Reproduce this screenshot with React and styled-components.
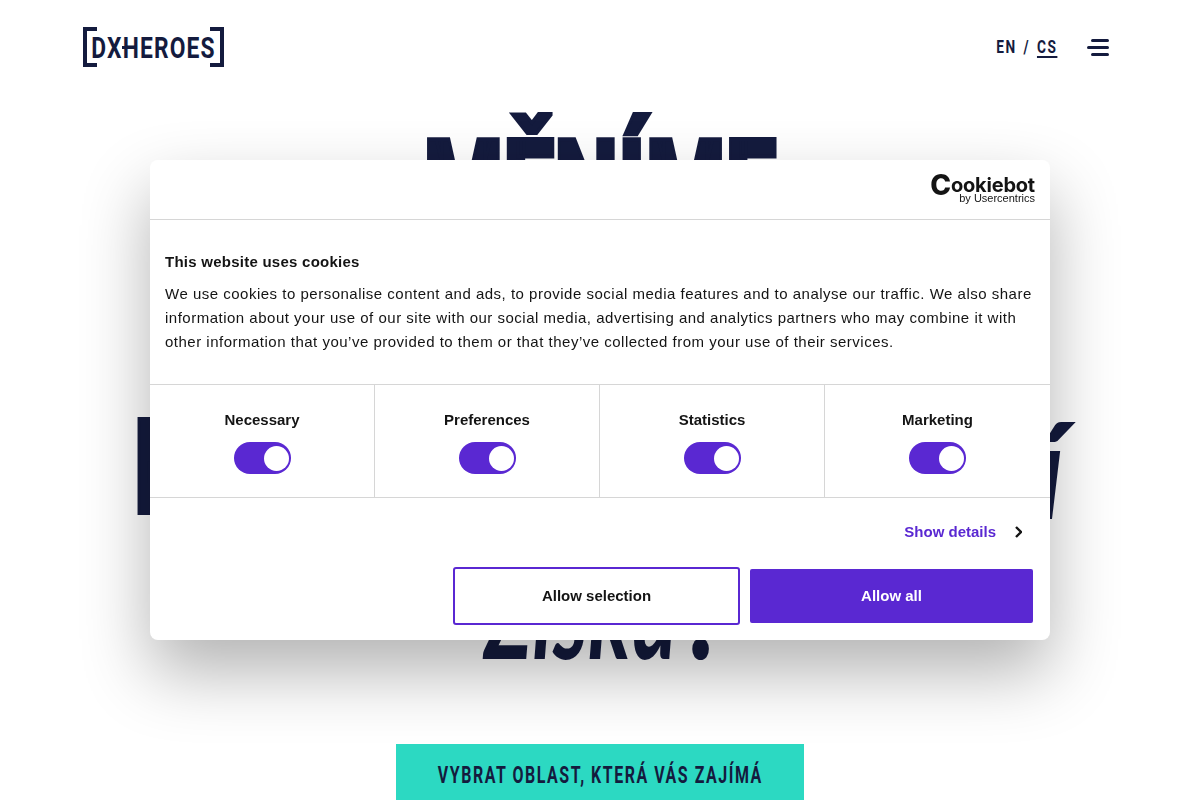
import React from 'react'
import styled, { createGlobalStyle } from 'styled-components'

const GlobalStyle = createGlobalStyle`
    html, body {
        margin: 0;
        height: 800px;
        overflow: hidden;
        background: #fff;
    }
`

const navy = '#141b3e'
const purple = '#5a28d2'
const condensed = 'Roboto, "Liberation Sans", sans-serif'

const Page = styled.div`
    color: ${navy};
    height: 800px;
    overflow: hidden;
`

const Header = styled.header`
    display: flex;
    align-items: center;
    justify-content: space-between;
    height: 40px;
    padding: 27px 91px 0 83px;
`

const Logo = styled.div`
    display: flex;
    align-items: center;
    justify-content: space-between;
    position: relative;
    width: 141px;
    height: 40px;
`

const Bracket = styled.span`
    display: block;
    box-sizing: border-box;
    width: 14px;
    height: 40px;
    border: solid ${navy};
    border-width: ${p => (p.$right ? '4px 4px 4px 0' : '4px 0 4px 4px')};
`

const LogoText = styled.span`
    display: flex;
    justify-content: center;
    width: 123px;
    margin: 0 -5px;
    font-family: ${condensed};
    font-weight: 700;
    font-size: 30px;
    letter-spacing: 1.5px;
    white-space: nowrap;
    transform: scaleX(.76);
`

/* the plus joining X and H in the wordmark */
const LogoCross = styled.span`
    position: absolute;
    left: 39px;
    top: 19px;
    width: 8px;
    height: 3px;
    background: ${navy};
`

const HeaderRight = styled.div`
    display: flex;
    align-items: center;
    gap: 30px;
`

const Lang = styled.div`
    display: flex;
    gap: 9px;
    margin-top: -2px;
    font-family: ${condensed};
    font-weight: 700;
    font-size: 18px;
    letter-spacing: 2px;
    transform: scaleX(.76);
    transform-origin: right;
`

const LangLink = styled.a`
    text-decoration: ${p => (p.$active ? 'underline' : 'none')};
    text-decoration-thickness: 2px;
    text-underline-offset: 3px;
`

const Burger = styled.button`
    display: flex;
    flex-direction: column;
    align-items: flex-end;
    gap: 4px;
    padding: 0;
    border: 0;
    background: none;
`

const BurgerLine = styled.span`
    display: block;
    height: 3px;
    border-radius: 2px;
    width: ${p => (p.$long ? 22 : 18)}px;
    background: ${navy};
`

const Hero = styled.h1`
    margin: 0;
    padding-top: 51px;
    font-weight: 400;
    font-size: 131px;
    line-height: 140px;
`

const HeroLine = styled.div`
    display: flex;
    justify-content: center;
    height: 140px;
    white-space: nowrap;
`

const SplitLine = styled(HeroLine)`
    justify-content: space-between;
    width: 931px;
    margin-left: 134px;
`

const FinalLine = styled(HeroLine)`
    align-items: baseline;
    padding-right: 42px;
`

const Heavy = styled.span`
    display: inline-block;
    font-family: Roboto, "Liberation Sans", sans-serif;
    font-weight: 900;
    -webkit-text-stroke: 4px ${navy};
    transform: scaleX(.695);
    transform-origin: ${p => p.$origin || 'center'};
    ${p => p.$width && `width: ${p.$width}px;`}
`

const Script = styled.span`
    display: inline-block;
    font-family: Lato, "Liberation Serif", serif;
    font-style: italic;
    font-weight: 700;
    font-size: 133px;
`

const FinalWord = styled.span`
    display: inline-block;
    transform: scaleX(.645);
`

const Period = styled.span`
    display: inline-block;
    margin-left: -44px;
    font-family: Roboto, "Liberation Sans", sans-serif;
    font-weight: 900;
    transform: scaleX(.7);
    transform-origin: left;
`

const CtaRow = styled.div`
    display: flex;
    justify-content: center;
    padding-top: 66px;
`

const Cta = styled.a`
    display: flex;
    justify-content: center;
    box-sizing: border-box;
    width: 408px;
    height: 64px;
    padding-top: 17px;
    background: #2cd9c2;
    font-family: ${condensed};
    font-weight: 700;
    font-size: 24px;
    letter-spacing: 2.3px;
    white-space: nowrap;
`

const CtaText = styled.span`
    display: block;
    transform: scaleX(.665);
`

const Dialog = styled.div`
    position: fixed;
    left: 150px;
    top: 160px;
    width: 900px;
    height: 480px;
    display: flex;
    flex-direction: column;
    background: #fff;
    color: #141414;
    border-radius: 8px;
    box-shadow: 0 32px 68px rgba(0, 0, 0, .3);
    font-family: "Liberation Sans", Arial, sans-serif;
    font-size: 15px;
    letter-spacing: .5px;
`

const DialogHead = styled.div`
    display: flex;
    justify-content: flex-end;
    box-sizing: border-box;
    height: 60px;
    padding: 15px 15px 0;
    border-bottom: 1px solid #d6d6d6;
`

const Brand = styled.div`
    display: flex;
    flex-direction: column;
    align-items: flex-end;
    color: #141414;
    letter-spacing: 0;
`

const BrandName = styled.div`
    font-family: Inter, sans-serif;
    font-weight: 700;
    font-size: 20px;
    line-height: 20px;
    letter-spacing: -.2px;
`

const BrandC = styled.span`
    font-size: 28px;
    line-height: 20px;
    font-weight: 800;
    vertical-align: -3px;
`

const BrandSub = styled.div`
    font-size: 11px;
    line-height: 11px;
    margin-top: -2px;
`

const Body = styled.div`
    box-sizing: border-box;
    height: 164px;
    padding: 32px 15px 0;
    line-height: 24px;
`

const Title = styled.div`
    font-weight: 700;
    margin-bottom: 11px;
    line-height: 19px;
    letter-spacing: .25px;
`

const Tabs = styled.div`
    display: grid;
    grid-template-columns: 225px 225px 225px 225px;
    box-sizing: border-box;
    height: 114px;
    border-top: 1px solid #d6d6d6;
    border-bottom: 1px solid #d6d6d6;
`

const Tab = styled.div`
    display: flex;
    flex-direction: column;
    align-items: center;
    padding-top: 26px;
    gap: 14px;
    border-right: ${p => (p.$last ? 0 : '1px solid #d6d6d6')};
    font-weight: 700;
    letter-spacing: 0;
    line-height: 17px;
`

const Toggle = styled.span`
    display: block;
    position: relative;
    width: 57px;
    height: 32px;
    border-radius: 16px;
    background: ${purple};
`

const Knob = styled.span`
    position: absolute;
    top: 4px;
    right: 2px;
    width: 25px;
    height: 25px;
    border-radius: 50%;
    background: #fff;
`

const Actions = styled.div`
    display: flex;
    flex-direction: column;
    align-items: flex-end;
    padding: 24px 17px 0;
`

const Details = styled.a`
    display: flex;
    align-items: center;
    gap: 19px;
    padding-right: 11px;
    color: ${purple};
    font-weight: 700;
    letter-spacing: 0;
    line-height: 20px;
`

const Buttons = styled.div`
    display: flex;
    align-items: center;
    gap: 10px;
    margin-top: 25px;
`

const Button = styled.button`
    box-sizing: border-box;
    width: ${p => (p.$fill ? 283 : 287)}px;
    height: ${p => (p.$fill ? 54 : 58)}px;
    padding: 0 0 2px;
    border: 2px solid ${purple};
    border-radius: ${p => (p.$fill ? 2 : 3)}px;
    background: ${p => (p.$fill ? purple : '#fff')};
    color: ${p => (p.$fill ? '#fff' : '#141414')};
    font: 700 15px "Liberation Sans", Arial, sans-serif;
`

const categories = ['Necessary', 'Preferences', 'Statistics', 'Marketing']

export default function App() {
    return (
        <Page>
            <GlobalStyle />
            <Header>
                <Logo>
                    <Bracket />
                    <LogoText>DXHEROES</LogoText>
                    <Bracket $right />
                    <LogoCross />
                </Logo>
                <HeaderRight>
                    <Lang>
                        <LangLink>EN</LangLink>
                        <span>/</span>
                        <LangLink $active>CS</LangLink>
                    </Lang>
                    <Burger aria-label="Menu">
                        <BurgerLine />
                        <BurgerLine $long />
                        <BurgerLine />
                    </Burger>
                </HeaderRight>
            </Header>

            <Hero>
                <HeroLine><Heavy>MĚNÍME</Heavy></HeroLine>
                <HeroLine><Heavy>TÝMY</Heavy></HeroLine>
                <SplitLine>
                    <Heavy $origin="left" $width={400}>PROCESY</Heavy>
                    <Script>firemní</Script>
                </SplitLine>
                <FinalLine>
                    <FinalWord><Script>Zisku</Script></FinalWord>
                    <Period>.</Period>
                </FinalLine>
            </Hero>

            <CtaRow>
                <Cta><CtaText>VYBRAT OBLAST, KTERÁ VÁS ZAJÍMÁ</CtaText></Cta>
            </CtaRow>

            <Dialog>
                <DialogHead>
                    <Brand>
                        <BrandName><BrandC>C</BrandC>ookiebot</BrandName>
                        <BrandSub>by Usercentrics</BrandSub>
                    </Brand>
                </DialogHead>
                <Body>
                    <Title>This website uses cookies</Title>
                    We use cookies to personalise content and ads, to provide social media features and to analyse our traffic. We also share information about your use of our site with our social media, advertising and analytics partners who may combine it with other information that you’ve provided to them or that they’ve collected from your use of their services.
                </Body>
                <Tabs>
                    {categories.map((name, i) => (
                        <Tab key={name} $last={i === categories.length - 1}>
                            {name}
                            <Toggle><Knob /></Toggle>
                        </Tab>
                    ))}
                </Tabs>
                <Actions>
                    <Details>
                        Show details
                        <svg width="7" height="12" viewBox="0 0 7 12" fill="none" stroke="#141414" strokeWidth="2.4">
                            <path d="M1 1l5 5-5 5" />
                        </svg>
                    </Details>
                    <Buttons>
                        <Button>Allow selection</Button>
                        <Button $fill>Allow all</Button>
                    </Buttons>
                </Actions>
            </Dialog>
        </Page>
    )
}
